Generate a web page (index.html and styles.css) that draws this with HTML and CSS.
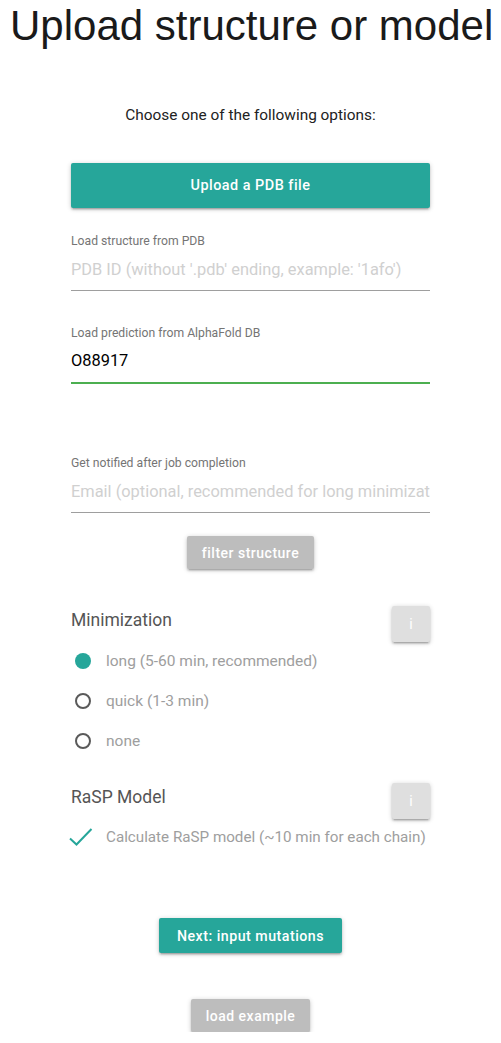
FILE: index.html
```html
<!DOCTYPE html>
<html>
<head>
<meta charset="utf-8">
<link rel="stylesheet" href="styles.css">
</head>
<body>
<h1 class="title">Upload structure or model</h1>
<main class="container">
  <p class="intro">Choose one of the following options:</p>
  <button class="btn btn-wide">Upload a PDB file</button>

  <div class="field field-pdb">
    <label class="field-label">Load structure from PDB</label>
    <div class="field-input placeholder">PDB ID (without '.pdb' ending, example: '1afo')</div>
  </div>

  <div class="field field-af">
    <label class="field-label">Load prediction from AlphaFold DB</label>
    <div class="field-input value focused">O88917</div>
  </div>

  <div class="field field-email">
    <label class="field-label">Get notified after job completion</label>
    <div class="field-input placeholder">Email (optional, recommended for long minimization)</div>
  </div>

  <div class="center">
    <button class="btn btn-disabled btn-filter">filter structure</button>
  </div>

  <section class="option-group group-min">
    <div class="group-head">
      <h2 class="group-title">Minimization</h2>
      <button class="btn-info">i</button>
    </div>
    <div class="radio-list">
      <div class="radio-row"><span class="radio checked"></span><span class="opt-label">long (5-60 min, recommended)</span></div>
      <div class="radio-row"><span class="radio"></span><span class="opt-label">quick (1-3 min)</span></div>
      <div class="radio-row"><span class="radio"></span><span class="opt-label">none</span></div>
    </div>
  </section>

  <section class="option-group group-rasp">
    <div class="group-head">
      <h2 class="group-title">RaSP Model</h2>
      <button class="btn-info">i</button>
    </div>
    <div class="check-row">
      <svg class="check" width="24" height="18" viewBox="0 0 24 18"><path d="M1 10.5 L7.5 16.5 L22.5 1" fill="none" stroke="#26a69a" stroke-width="2"/></svg>
      <span class="opt-label check-label">Calculate RaSP model (~10 min for each chain)</span>
    </div>
  </section>

  <div class="center next-wrap">
    <button class="btn btn-next">Next: input mutations</button>
  </div>
  <div class="center example-wrap">
    <button class="btn btn-disabled btn-example">load example</button>
  </div>
</main>
</body>
</html>
```
FILE: styles.css
```css
html, body {
  margin: 0;
  padding: 0;
  background: #fff;
}
body {
  font-family: Roboto, "Liberation Sans", sans-serif;
  color: rgba(0,0,0,0.87);
  overflow: hidden;
}
.title {
  font-family: "Liberation Sans", Arial, sans-serif;
  font-weight: 400;
  font-size: 42px;
  line-height: 48px;
  margin: 0;
  padding: 2px 0 0 10px;
  color: #1a1a1a;
  white-space: nowrap;
}
.container {
  width: 359px;
  margin: 0 auto;
}
.intro {
  text-align: center;
  font-size: 15.4px;
  line-height: 20px;
  margin: 55px 0 0;
  color: #222;
}
.btn {
  border: none;
  border-radius: 2px;
  background: #26a69a;
  color: #fff;
  font-family: Roboto, "Liberation Sans", sans-serif;
  font-size: 14px;
  font-weight: 500;
  letter-spacing: .5px;
  box-shadow: 0 2px 2px 0 rgba(0,0,0,.14), 0 3px 1px -2px rgba(0,0,0,.12), 0 1px 5px 0 rgba(0,0,0,.2);
  padding: 0 16px;
  cursor: pointer;
}
.btn-wide {
  display: block;
  width: 100%;
  height: 45px;
  margin-top: 38px;
  font-size: 14.4px;
}
.field-label {
  display: block;
  font-size: 12.2px;
  line-height: 14px;
  color: #757575;
}
.field-input {
  font-size: 16.4px;
  line-height: 20px;
  padding: 12px 0 10px;
  border-bottom: 1px solid #9e9e9e;
  white-space: nowrap;
  overflow: hidden;
}
.field-input.placeholder {
  color: #d0d0d0;
}
.field-input.value {
  color: #000;
}
.field-input.focused {
  border-bottom: 2px solid #4caf50;
  padding-top: 11px;
  padding-bottom: 11px;
}
.field-pdb { margin-top: 26px; }
.field-af { margin-top: 35px; }
.field-email { margin-top: 72px; }
.center {
  display: flex;
  justify-content: center;
}
.btn-disabled {
  background: #bdbdbd;
  color: #fff;
}
.btn-filter {
  height: 33px;
  margin-top: 23px;
  padding: 0 15px;
}
.option-group {
  margin-top: 37px;
}
.group-head {
  display: flex;
  justify-content: space-between;
  align-items: flex-start;
}
.group-title {
  margin: 2px 0 0;
  font-size: 17.5px;
  line-height: 24px;
  font-weight: 400;
  color: #555;
}
.btn-info {
  width: 38px;
  height: 36px;
  border: none;
  border-radius: 2px;
  background: #dfdfdf;
  color: #fff;
  font-family: Roboto, sans-serif;
  font-size: 14px;
  box-shadow: 0 2px 2px 0 rgba(0,0,0,.14), 0 3px 1px -2px rgba(0,0,0,.12), 0 1px 5px 0 rgba(0,0,0,.2);
}
.radio-list {
  margin-top: -1px;
}
.radio-row {
  display: flex;
  align-items: center;
  height: 40px;
}
.radio {
  box-sizing: border-box;
  width: 16px;
  height: 16px;
  border-radius: 50%;
  border: 2px solid #5a5a5a;
  margin-left: 4px;
  margin-right: 15px;
}
.radio.checked {
  border: none;
  background: #26a69a;
}
.opt-label {
  font-size: 15.5px;
  color: #9e9e9e;
  white-space: nowrap;
}
.check-label {
  font-size: 15.2px;
}
.group-rasp { margin-top: 22px; }
.check-row {
  display: flex;
  align-items: center;
  height: 36px;
}
.check {
  flex: none;
  margin-left: -2px;
  margin-right: 13px;
}
.next-wrap { margin-top: 63px; }
.btn-next {
  height: 35px;
  font-size: 14.2px;
  padding: 0 18px;
}
.example-wrap { margin-top: 46px; }
.btn-example {
  height: 33px;
  padding: 0 15px;
}
```
